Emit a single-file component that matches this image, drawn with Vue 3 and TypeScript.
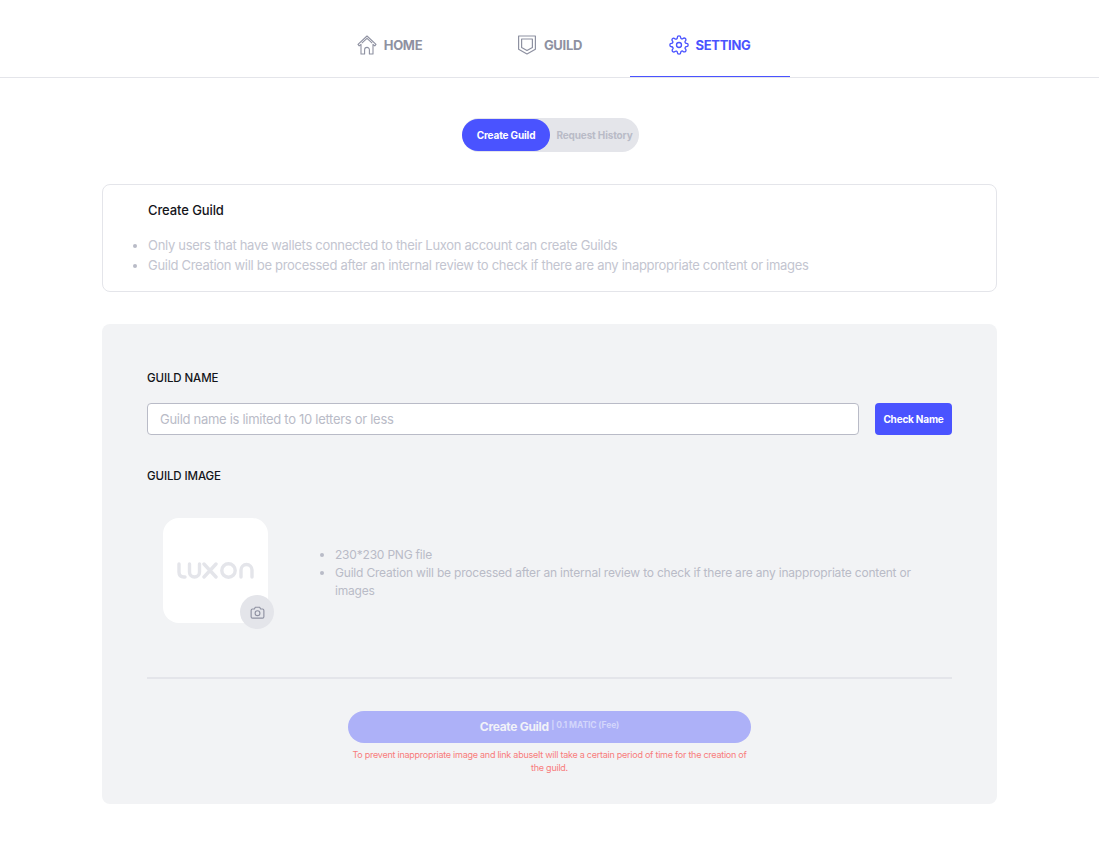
<script setup lang="ts">
import { ref } from 'vue';

const activeTab = ref('create');
const guildName = ref('');

const noticeItems = [
  'Only users that have wallets connected to their Luxon account can create Guilds',
  'Guild Creation will be processed after an internal review to check if there are any inappropriate content or images',
];
const imageItems = [
  '230*230 PNG file',
  'Guild Creation will be processed after an internal review to check if there are any inappropriate content or images',
];
</script>

<template>
  <div class="page">
    <nav class="nav">
      <a class="nav-item">
        <svg width="20" height="20" viewBox="0 0 20 20" fill="none" stroke="currentColor" stroke-width="1.1" stroke-linejoin="round">
          <path d="M10 1 1 9.400l1.200 1.500L4 9.300v9.700h3.600v-4.200a2.400 2.400 0 0 1 4.800 0V19H16V9.300l1.800 1.600L19 9.400z" />
          <path d="M4.800 8.200 10 3.400l5.200 4.800" />
        </svg>
        HOME
      </a>
      <a class="nav-item">
        <svg width="20" height="20" viewBox="0 0 20 20" fill="none" stroke="currentColor" stroke-width="1.2" stroke-linejoin="round">
          <path d="M1.600 1h16.800v13.200L10 19l-8.400-4.800z" />
          <path d="M4.600 4h10.800v8.400L10 15.600l-5.400-3.200z" />
        </svg>
        GUILD
      </a>
      <a class="nav-item active">
        <svg width="20" height="20" viewBox="0 0 24 24" fill="none" stroke="currentColor" stroke-width="1.6" stroke-linecap="round" stroke-linejoin="round">
          <circle cx="12" cy="12" r="3" />
          <path d="M19.4 15a1.65 1.65 0 0 0 .33 1.82l.06.06a2 2 0 1 1-2.83 2.83l-.06-.06a1.65 1.65 0 0 0-2.82 1.17V21a2 2 0 1 1-4 0v-.09a1.65 1.65 0 0 0-2.82-1.12l-.06.06a2 2 0 1 1-2.83-2.83l.06-.06a1.65 1.65 0 0 0-1.17-2.82H3a2 2 0 1 1 0-4h.09a1.65 1.65 0 0 0 1.12-2.82l-.06-.06a2 2 0 1 1 2.83-2.83l.06.06a1.65 1.65 0 0 0 1.82.33H9a1.65 1.65 0 0 0 1-1.51V3a2 2 0 1 1 4 0v.09a1.65 1.65 0 0 0 2.82 1.12l.06-.06a2 2 0 1 1 2.83 2.83l-.06.06a1.65 1.65 0 0 0-.33 1.82V9a1.65 1.65 0 0 0 1.51 1H21a2 2 0 1 1 0 4h-.09a1.65 1.65 0 0 0-1.51 1z" />
        </svg>
        SETTING
      </a>
    </nav>

    <main class="content">
      <div class="toggle">
        <button class="toggle-btn" :class="{ on: activeTab === 'create' }" @click="activeTab = 'create'">Create Guild</button>
        <button class="toggle-btn" :class="{ on: activeTab === 'history' }" @click="activeTab = 'history'">Request History</button>
      </div>

      <section class="notice">
        <h2 class="notice-title">Create Guild</h2>
        <ul class="notice-list">
          <li v-for="item in noticeItems" :key="item">{{ item }}</li>
        </ul>
      </section>

      <section class="panel">
        <label class="field-label">GUILD NAME</label>
        <div class="name-row">
          <input v-model="guildName" class="name-input" placeholder="Guild name is limited to 10 letters or less" />
          <button class="check-btn">Check Name</button>
        </div>

        <label class="field-label image-label">GUILD IMAGE</label>
        <div class="image-row">
          <div class="image-box">
            <!-- luxon logo mark -->
            <svg width="77" height="17" viewBox="0 0 77 17" fill="none" stroke="#e4e5ea" stroke-width="3.4" stroke-linecap="round">
              <path d="M2 2v8q0 5 5 5h1" />
              <path d="M12.500 2v8a5 5 0 0 0 10 0V2" />
              <path d="M27 2l12 13M39 2L27 15" />
              <circle cx="51.500" cy="8.500" r="6.700" />
              <path d="M64 15V8a5.500 5.500 0 0 1 11 0v7" />
            </svg>
            <span class="camera">
              <svg width="17" height="17" viewBox="0 0 24 24" fill="none" stroke="currentColor" stroke-width="1.6" stroke-linejoin="round">
                <path d="M3 9a2 2 0 0 1 2-2h2.600l1.300-2.400h6.200L16.400 7H19a2 2 0 0 1 2 2v9a2 2 0 0 1-2 2H5a2 2 0 0 1-2-2z" />
                <circle cx="12" cy="13" r="3.400" />
              </svg>
            </span>
          </div>
          <ul class="image-list">
            <li v-for="item in imageItems" :key="item">{{ item }}</li>
          </ul>
        </div>

        <div class="divider"></div>

        <div class="submit">
          <button class="submit-btn" disabled>Create Guild <small>| 0.1 MATIC (Fee)</small></button>
          <p class="warning">To prevent inappropriate image and link abuseIt will take a certain period of time for the creation of the guild.</p>
        </div>
      </section>
    </main>
  </div>
</template>

<style scoped>
.page {
  width: 1099px;
  padding-bottom: 41px;
  font-family: Inter, "Noto Sans", sans-serif;
  color: #14151a;
  background: #fff;
}

.nav {
  display: flex;
  justify-content: center;
  height: 77px;
  border-bottom: 1px solid #e4e5ea;
  box-sizing: content-box;
}

.nav-item {
  display: flex;
  align-items: center;
  justify-content: center;
  gap: 7px;
  width: 160px;
  height: 77px;
  box-sizing: border-box;
  padding-top: 13px;
  font-size: 13px;
  font-weight: 700;
  letter-spacing: -0.3px;
  color: #8e91a1;
  cursor: pointer;
}

.nav-item.active {
  color: #4a53ff;
  border-bottom: 1px solid #4a53ff;
  padding-top: 14px;
}

.content {
  display: flex;
  flex-direction: column;
  align-items: center;
  padding: 40px 0 0;
}

.toggle {
  display: flex;
  align-items: center;
  width: 177px;
  height: 34px;
  margin-left: 2px;
  box-sizing: border-box;
  border-radius: 17px;
  background: #e4e5ea;
}

.toggle-btn {
  height: 32px;
  padding: 0 0 1px;
  border: 0;
  border-radius: 16px;
  background: transparent;
  font-family: inherit;
  font-size: 10px;
  font-weight: 700;
  letter-spacing: -0.15px;
  color: #b9bbc7;
  cursor: pointer;
}

.toggle-btn:first-child {
  width: 88px;
}

.toggle-btn:last-child {
  width: 89px;
}

.toggle-btn.on {
  color: #fff;
  background: #4a53ff;
}

.notice {
  width: 895px;
  height: 108px;
  box-sizing: border-box;
  margin-top: 32px;
  padding: 17px 45px 0;
  border: 1px solid #e4e5ea;
  border-radius: 8px;
}

.notice-title {
  margin: 0;
  font-size: 13px;
  line-height: 16px;
  font-weight: 500;
  letter-spacing: -0.1px;
}

.notice-list {
  margin: 17px 0 0;
  padding: 0;
  font-size: 13px;
  line-height: 20px;
  letter-spacing: -0.3px;
  color: #c3c5d0;
}

.notice-list li::marker {
  color: #b9bbc7;
}

.panel {
  width: 895px;
  height: 480px;
  box-sizing: border-box;
  margin-top: 32px;
  padding: 46px 45px 0;
  border-radius: 8px;
  background: #f2f3f5;
}

.field-label {
  display: block;
  font-size: 11.5px;
  line-height: 16px;
  font-weight: 500;
  letter-spacing: -0.1px;
}

.name-row {
  display: flex;
  gap: 16px;
  margin-top: 17px;
}

.name-input {
  flex: 1;
  height: 32px;
  box-sizing: border-box;
  padding: 0 12px;
  border: 1px solid #b9bbc7;
  border-radius: 4px;
  outline: none;
  background: #fff;
  font-family: inherit;
  font-size: 13px;
  letter-spacing: -0.29px;
}

.name-input::placeholder {
  color: #b9bbc7;
}

.check-btn {
  width: 77px;
  height: 32px;
  padding: 0 0 1px;
  border: 0;
  border-radius: 4px;
  background: #4a53ff;
  color: #fff;
  font-family: inherit;
  font-size: 10px;
  font-weight: 700;
  letter-spacing: -0.2px;
  cursor: pointer;
}

.image-label {
  margin-top: 33px;
}

.image-row {
  display: flex;
  align-items: center;
  margin-top: 34px;
  padding-left: 16px;
}

.image-box {
  position: relative;
  display: flex;
  align-items: center;
  justify-content: center;
  flex: none;
  width: 105px;
  height: 105px;
  border-radius: 16px;
  background: #fff;
}

.camera {
  position: absolute;
  right: -6px;
  bottom: -6px;
  display: flex;
  align-items: center;
  justify-content: center;
  width: 34px;
  height: 34px;
  border-radius: 50%;
  background: #e4e5ea;
  color: #8e91a1;
}

.image-list {
  flex: 1;
  margin: 4px 0 0;
  padding: 0 0 0 67px;
  font-size: 12px;
  line-height: 18px;
  letter-spacing: -0.2px;
  color: #b9bbc7;
}

.divider {
  height: 2px;
  margin-top: 54px;
  background: #e4e5ea;
}

.submit {
  display: flex;
  flex-direction: column;
  align-items: center;
  margin-top: 32px;
}

.submit-btn {
  width: 403px;
  height: 32px;
  padding: 0 0 1px;
  border: 0;
  border-radius: 16px;
  background: #adb1f8;
  color: #f1f2f8;
  font-family: inherit;
  font-size: 12px;
  font-weight: 700;
  letter-spacing: -0.3px;
}

.submit-btn small {
  position: relative;
  top: -3px;
  font-size: 8.5px;
  font-weight: 700;
  letter-spacing: -0.1px;
  color: #d3d6fb;
}

.warning {
  width: 403px;
  margin: 5px 0 0;
  font-size: 9px;
  line-height: 13px;
  letter-spacing: -0.25px;
  text-align: center;
  color: #f87c7c;
}
</style>
